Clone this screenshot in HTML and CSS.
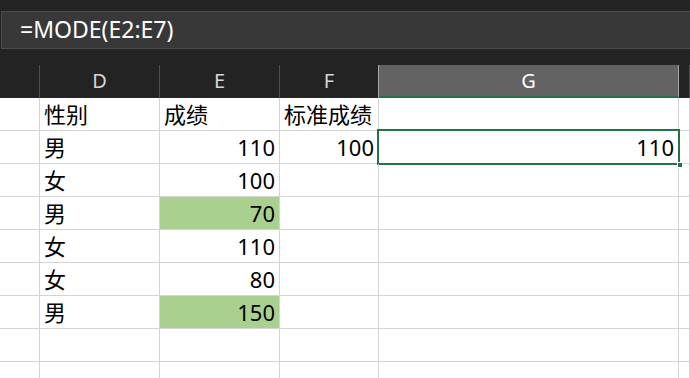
FILE: index.html
```html
<!DOCTYPE html>
<html lang="zh-CN">
<head>
    <meta charset="UTF-8">
    <meta name="viewport" content="width=device-width, initial-scale=1.0">
    <title>MODE</title>
    <link rel="stylesheet" href="styles.css">
</head>
<body>
    <div class="formula-area">
        <div class="formula-box">=MODE(E2:E7)</div>
    </div>

    <div class="sheet">
        <div class="col-head"></div>
        <div class="col-head">D</div>
        <div class="col-head">E</div>
        <div class="col-head edge">F</div>
        <div class="col-head active">G</div>
        <div class="col-head"></div>

        <div class="cell"></div>
        <div class="cell">性别</div>
        <div class="cell">成绩</div>
        <div class="cell">标准成绩</div>
        <div class="cell"></div>
        <div class="cell"></div>

        <div class="cell"></div>
        <div class="cell">男</div>
        <div class="cell num">110</div>
        <div class="cell num">100</div>
        <div class="cell num selected">110<span class="handle"></span></div>
        <div class="cell"></div>

        <div class="cell"></div>
        <div class="cell">女</div>
        <div class="cell num">100</div>
        <div class="cell"></div>
        <div class="cell"></div>
        <div class="cell"></div>

        <div class="cell"></div>
        <div class="cell">男</div>
        <div class="cell num hit">70</div>
        <div class="cell"></div>
        <div class="cell"></div>
        <div class="cell"></div>

        <div class="cell"></div>
        <div class="cell">女</div>
        <div class="cell num">110</div>
        <div class="cell"></div>
        <div class="cell"></div>
        <div class="cell"></div>

        <div class="cell"></div>
        <div class="cell">女</div>
        <div class="cell num">80</div>
        <div class="cell"></div>
        <div class="cell"></div>
        <div class="cell"></div>

        <div class="cell"></div>
        <div class="cell">男</div>
        <div class="cell num hit">150</div>
        <div class="cell"></div>
        <div class="cell"></div>
        <div class="cell"></div>

        <div class="cell"></div>
        <div class="cell"></div>
        <div class="cell"></div>
        <div class="cell"></div>
        <div class="cell"></div>
        <div class="cell"></div>

        <div class="cell"></div>
        <div class="cell"></div>
        <div class="cell"></div>
        <div class="cell"></div>
        <div class="cell"></div>
        <div class="cell"></div>
    </div>
</body>
</html>
```

FILE: styles.css
```css
*{
    margin: 0;
    padding: 0;
    box-sizing: border-box;
}

body{
    background-color: #232323;
    font-family: "Noto Sans", "Noto Sans CJK SC", sans-serif;
    overflow: hidden;
    height: 378px;
}

.formula-area{
    padding: 11px 0 16px 1px;
}

.formula-box{
    height: 38px;
    width: 720px;
    background-color: #383838;
    border: 1px solid #4b4b4b;
    color: #fff;
    font-size: 23px;
    line-height: 34px;
    padding-left: 18px;
}

.sheet{
    display: grid;
    grid-template-columns: 40px 120px 120px 99px 300px 1fr;
    grid-auto-rows: 33px;
    background-color: #fff;
}

.col-head{
    background-color: #232323;
    color: #d6d6d6;
    font-size: 20px;
    text-align: center;
    line-height: 31px;
    border-right: 1px solid #4e4e4e;
}

.col-head.edge{
    border-right-color: #a8a8a8;
}

.col-head.active{
    background-color: #636363;
    color: #fff;
    border-right-color: #a8a8a8;
    border-bottom: 2px solid #217346;
}

.cell{
    position: relative;
    border-right: 1px solid #d4d4d4;
    border-bottom: 1px solid #d4d4d4;
    color: #000;
    font-size: 22px;
    line-height: 32px;
    padding: 0 4px;
}

.num{
    text-align: right;
}

.hit{
    background-color: #a9d08e;
}

.selected::after{
    content: "";
    position: absolute;
    left: -2px;
    top: -2px;
    right: -2px;
    bottom: -2px;
    border: 2px solid #217346;
}

.handle{
    position: absolute;
    right: -5px;
    bottom: -5px;
    width: 6px;
    height: 6px;
    background-color: #217346;
    border: 1px solid #fff;
    z-index: 1;
}
```
